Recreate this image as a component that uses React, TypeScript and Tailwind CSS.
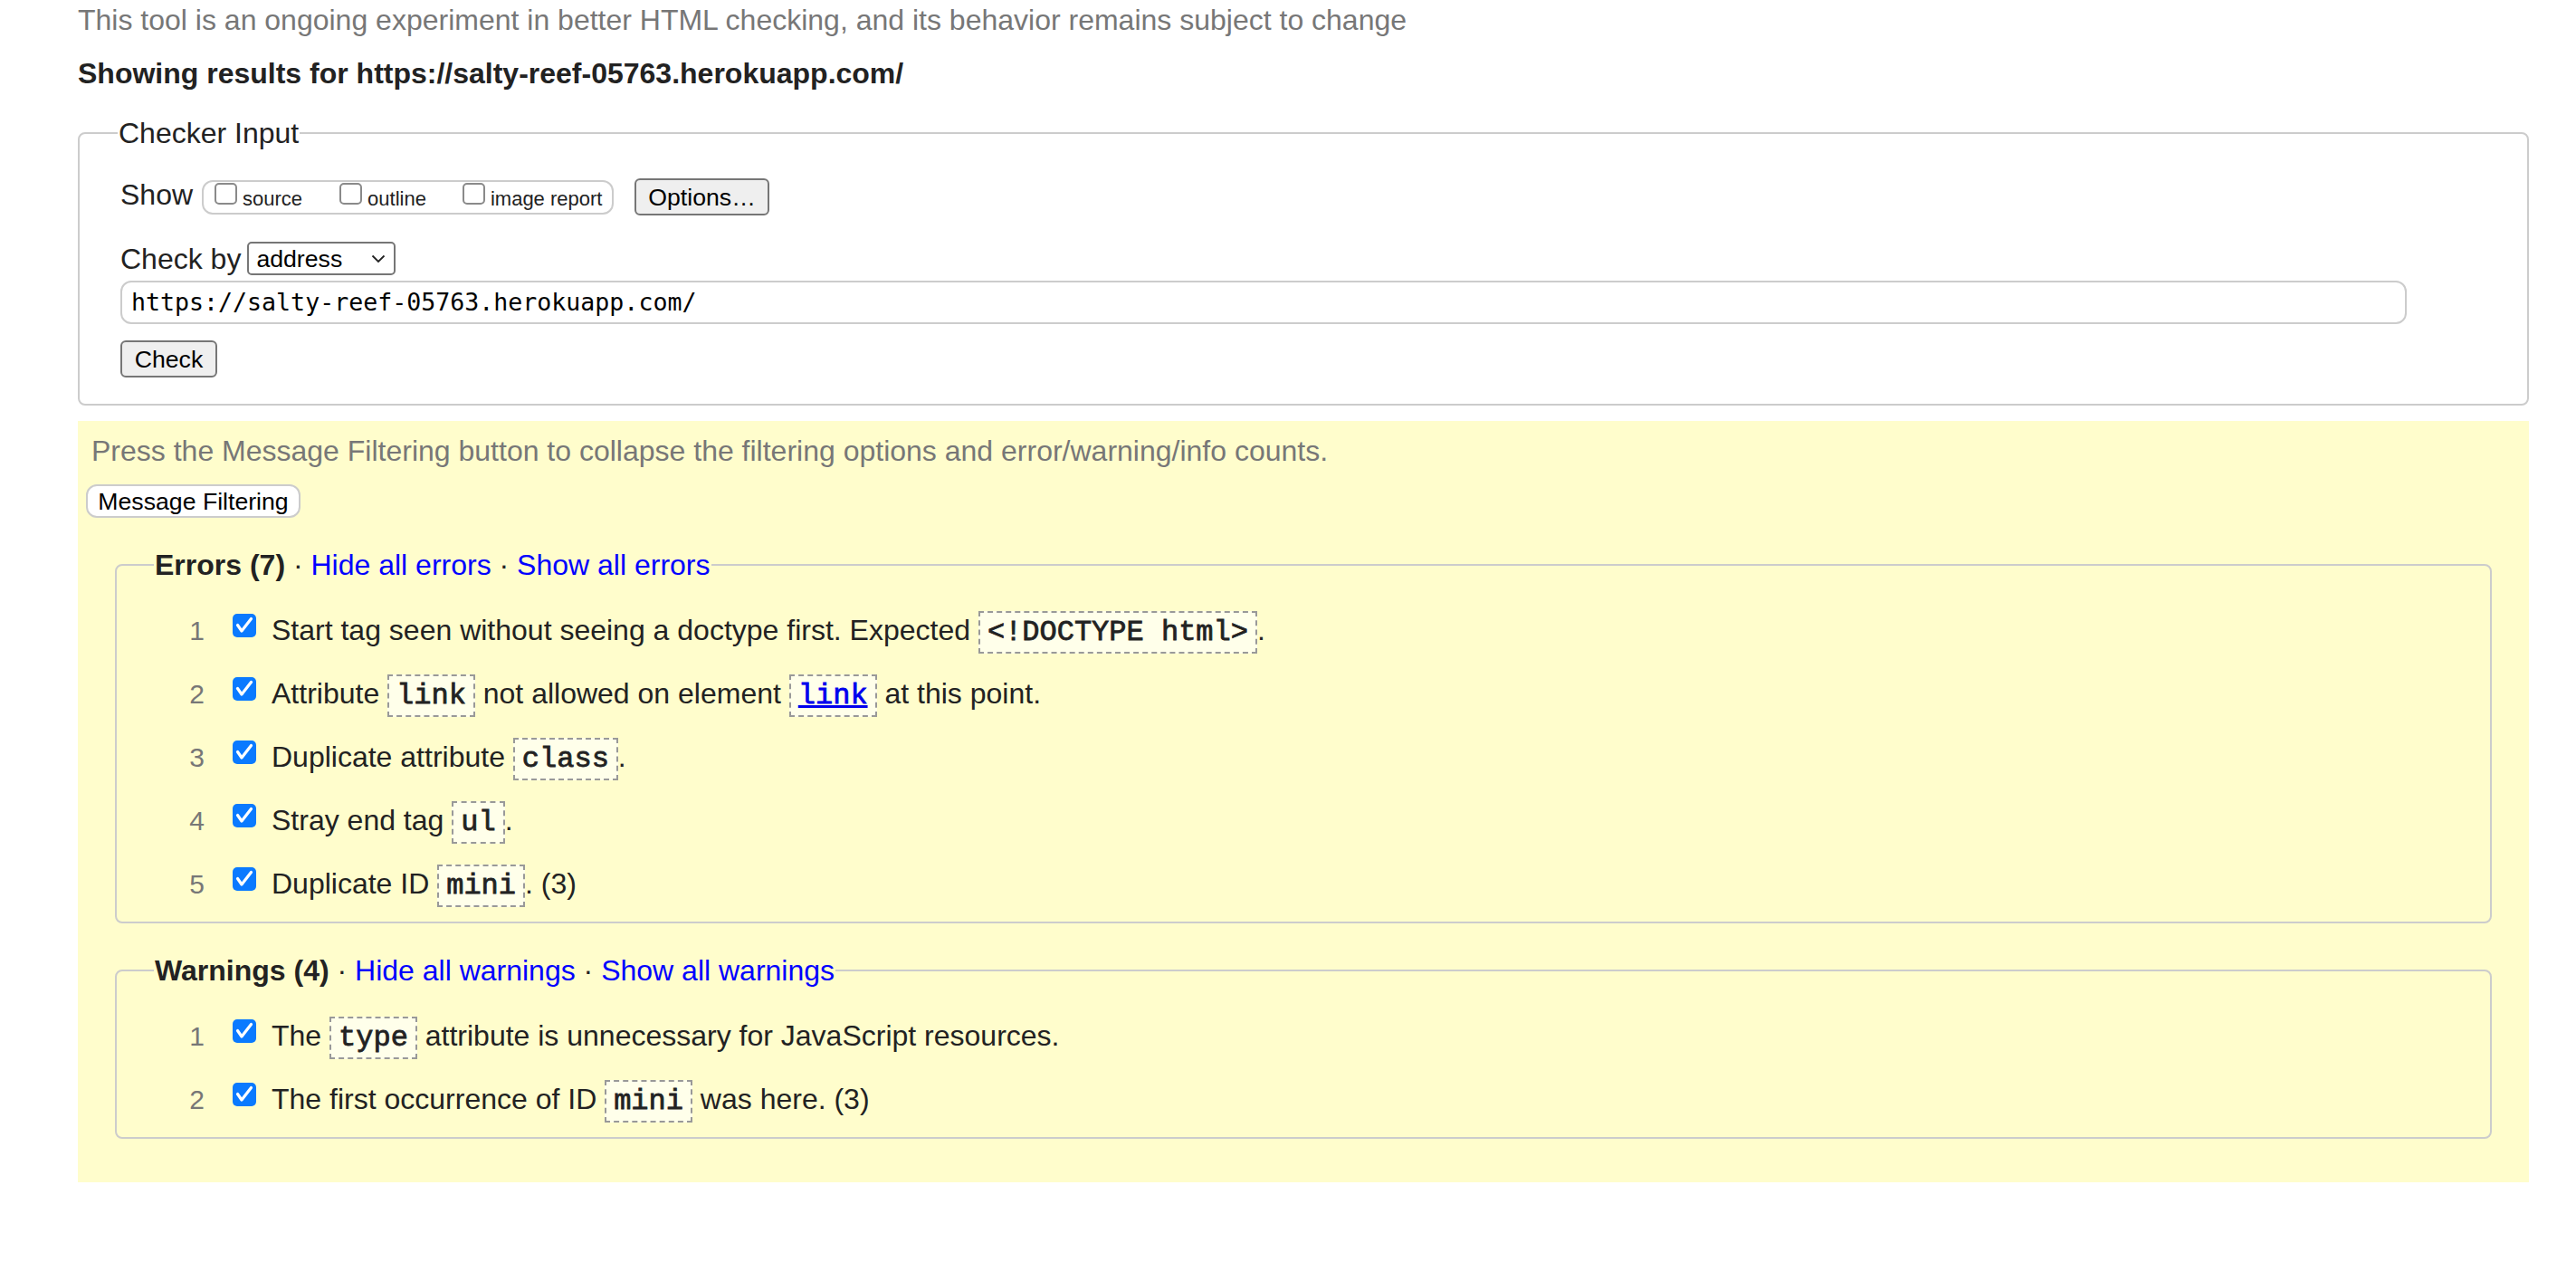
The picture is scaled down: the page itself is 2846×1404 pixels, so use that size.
import React from "react";

const Checked = ({ className = "" }: { className?: string }) => (
  <svg width="26" height="26" viewBox="0 0 26 26" className={"shrink-0 self-start " + className}>
    <rect x="0" y="0" width="26" height="26" rx="5" fill="#0a7aff" />
    <path d="M5.5 12.5 L10 19 L20.5 5.5" stroke="#fff" strokeWidth="3.2" fill="none" strokeLinecap="round" strokeLinejoin="round" />
  </svg>
);

const Unchecked = () => (
  <div className="w-[25px] h-[24px] shrink-0 rounded-[5px] border-2 border-[#8a8a8a] bg-white mb-[5px]" />
);

const Code = ({ children }: { children: React.ReactNode }) => (
  <code className="font-['Liberation_Mono',monospace] text-[32px] leading-[24px] font-normal [-webkit-text-stroke:0.8px_#222] text-[#222] border-2 border-dashed border-[#999] bg-[#ffffea] px-[8px] py-[3px]">
    {children}
  </code>
);

const Row = ({ n, children }: { n: number; children: React.ReactNode }) => (
  <li className="flex items-baseline h-[70px] pt-[16.75px]">
    <span className="w-[56px] shrink-0 text-right text-[30px] text-[#777]">{n}</span>
    <Checked className="ml-[31px]" />
    <span className="ml-[17px] text-[#222]">{children}</span>
  </li>
);

export default function App() {
  return (
    <div className="min-h-[1404px] bg-white pl-[86px] pr-[52px] font-['Liberation_Sans',Arial,sans-serif] text-[32px] leading-[36px] text-[#222]">
      <p className="pt-[4px] text-[#777]">
        This tool is an ongoing experiment in better HTML checking, and its behavior remains subject to change
      </p>
      <p className="mt-[23px] font-bold text-[#222]">Showing results for https://salty-reef-05763.herokuapp.com/</p>

      <fieldset className="mt-[30px] border-2 border-[#ccc] rounded-[8px] pl-[45px] pb-[29px]">
        <legend className="-ml-[3px] px-[1px]">Checker Input</legend>
        <div className="mt-[32px] flex items-center h-[41px]">
          <span className="mb-[5px]">Show</span>
          <div className="ml-[10px] flex items-center h-[38px] w-[455px] rounded-[12px] border-2 border-[#ccc] pl-[12px] pb-[3px] gap-[42px] text-[22px] leading-[22px]">
            <label className="flex items-end gap-[6px]">
              <Unchecked />
              <span>source</span>
            </label>
            <label className="flex items-end gap-[6px] -ml-[1px]">
              <Unchecked />
              <span>outline</span>
            </label>
            <label className="flex items-end gap-[6px] -ml-[2px]">
              <Unchecked />
              <span>image report</span>
            </label>
          </div>
          <button className="ml-[23px] h-[41px] w-[149px] rounded-[6px] border-2 border-[#767676] bg-[#efefef] text-[26.67px] leading-[30px] text-black">
            Options…
          </button>
        </div>
        <div className="mt-[29px] flex items-center h-[37px]">
          <span>Check by</span>
          <div className="ml-[7px] flex items-center justify-between h-[37px] w-[164px] rounded-[5px] border-2 border-[#767676] pl-[8px] pr-[9px] text-[26.67px] leading-[30px] text-black">
            <span>address</span>
            <svg width="16" height="10" viewBox="0 0 16 10">
              <polyline points="1.5,1.5 8,8 14.5,1.5" fill="none" stroke="#222" strokeWidth="1.8" />
            </svg>
          </div>
        </div>
        <div className="mt-[6px] flex items-center h-[48px] w-[2526px] rounded-[12px] border-2 border-[#ccc] pl-[10px] font-['DejaVu_Sans_Mono',monospace] text-[26.6px] text-black">
          https://salty-reef-05763.herokuapp.com/
        </div>
        <button className="mt-[18px] h-[41px] w-[107px] rounded-[6px] border-2 border-[#767676] bg-[#efefef] text-[26.67px] leading-[30px] text-black">
          Check
        </button>
      </fieldset>

      <div className="mt-[17px] bg-[#fffdcc] pt-[15px] pb-[48px]">
        <p className="pl-[15px] text-[#777]">
          Press the Message Filtering button to collapse the filtering options and error/warning/info counts.
        </p>
        <button className="ml-[9px] mt-[19px] h-[37px] w-[237px] rounded-[12px] border-2 border-[#ccc] bg-white text-[26.67px] leading-[30px] text-black">
          Message Filtering
        </button>

        <fieldset className="mt-[34px] mx-[41px] border-2 border-[#ccc] rounded-[8px] pl-[41px] pt-[19px] pb-[7px]">
          <legend className="px-[1px]">
            <b>Errors (7)</b> · <a className="text-[#00f]">Hide all errors</a> · <a className="text-[#00f]">Show all errors</a>
          </legend>
          <ol>
            <Row n={1}>
              Start tag seen without seeing a doctype first. Expected <Code>&lt;!DOCTYPE html&gt;</Code>.
            </Row>
            <Row n={2}>
              Attribute <Code>link</Code> not allowed on element{" "}
              <Code>
                <a className="text-[#00e] underline [-webkit-text-stroke:0.8px_#00e]">link</a>
              </Code>{" "}
              at this point.
            </Row>
            <Row n={3}>
              Duplicate attribute <Code>class</Code>.
            </Row>
            <Row n={4}>
              Stray end tag <Code>ul</Code>.
            </Row>
            <Row n={5}>
              Duplicate ID <Code>mini</Code>. (3)
            </Row>
          </ol>
        </fieldset>

        <fieldset className="mt-[34px] mx-[41px] border-2 border-[#ccc] rounded-[8px] pl-[41px] pt-[19px] pb-[7px]">
          <legend className="px-[1px]">
            <b>Warnings (4)</b> · <a className="text-[#00f]">Hide all warnings</a> · <a className="text-[#00f]">Show all warnings</a>
          </legend>
          <ol>
            <Row n={1}>
              The <Code>type</Code> attribute is unnecessary for JavaScript resources.
            </Row>
            <Row n={2}>
              The first occurrence of ID <Code>mini</Code> was here. (3)
            </Row>
          </ol>
        </fieldset>
      </div>
    </div>
  );
}
